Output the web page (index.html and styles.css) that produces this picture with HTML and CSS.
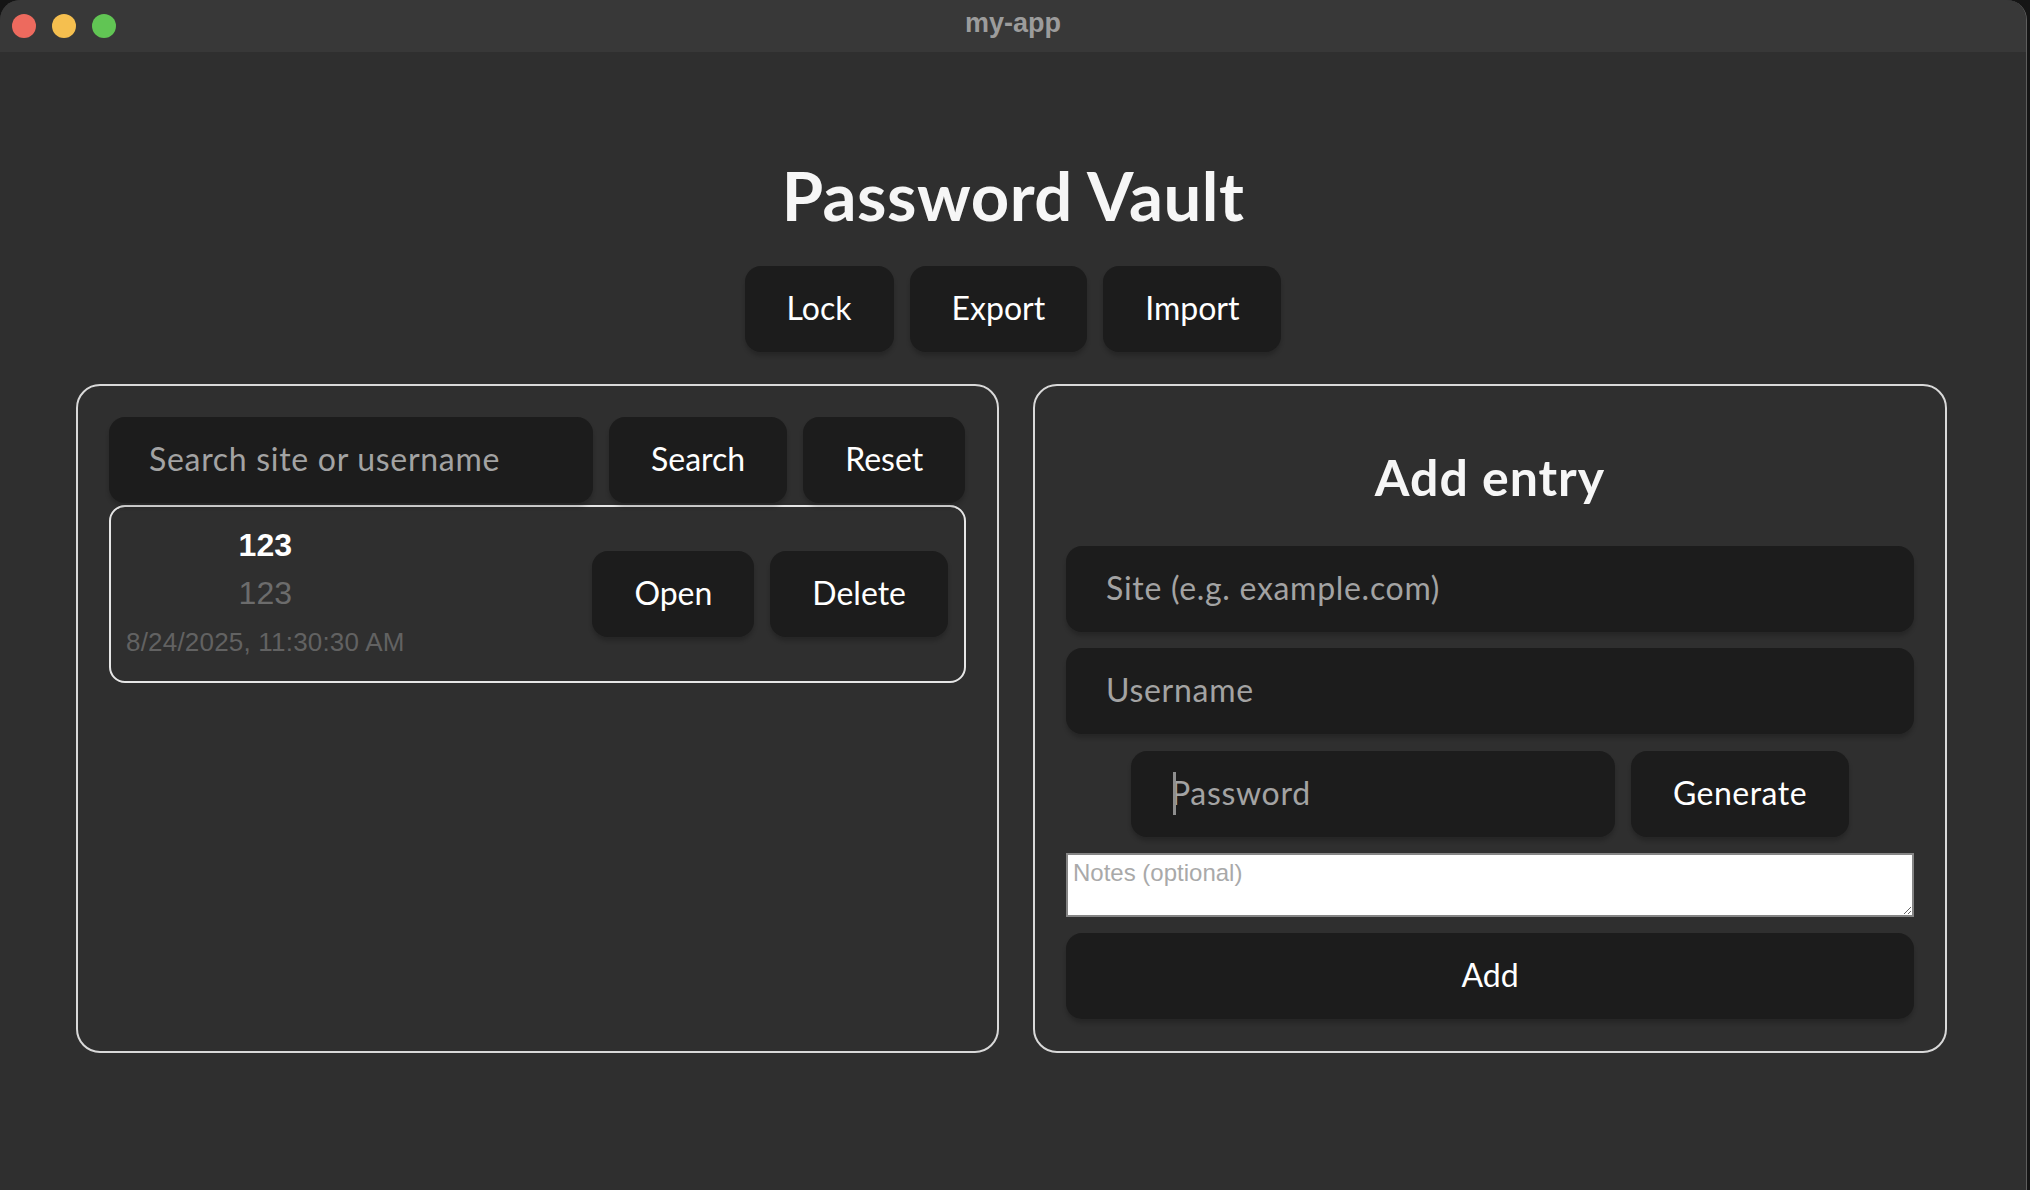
FILE: index.html
```html
<!DOCTYPE html>
<html lang="en">
<head>
<meta charset="utf-8">
<title>my-app</title>
<link rel="stylesheet" href="styles.css">
</head>
<body>
<div class="window">
  <header class="titlebar">
    <div class="lights">
      <span class="light red"></span>
      <span class="light yellow"></span>
      <span class="light green"></span>
    </div>
    <div class="win-title">my-app</div>
    <div class="titlebar-spacer"></div>
  </header>
  <main class="container">
    <h1 class="title">Password Vault</h1>
    <div class="toolbar">
      <button class="btn">Lock</button>
      <button class="btn">Export</button>
      <button class="btn">Import</button>
    </div>
    <div class="columns">
      <section class="panel">
        <div class="search-row">
          <input class="field" type="text" placeholder="Search site or username">
          <button class="btn">Search</button>
          <button class="btn">Reset</button>
        </div>
        <div class="entry">
          <div class="entry-info">
            <div class="entry-site">123</div>
            <div class="entry-user">123</div>
            <div class="entry-date">8/24/2025, 11:30:30 AM</div>
          </div>
          <div class="entry-actions">
            <button class="btn">Open</button>
            <button class="btn">Delete</button>
          </div>
        </div>
      </section>
      <section class="panel form">
        <h2 class="form-title">Add entry</h2>
        <input class="field wide" type="text" placeholder="Site (e.g. example.com)">
        <input class="field wide" type="text" placeholder="Username">
        <div class="pw-row">
          <div class="pw-wrap">
            <input class="field" type="password" placeholder="Password">
            <span class="caret"></span>
          </div>
          <button class="btn btn-generate">Generate</button>
        </div>
        <textarea class="notes" placeholder="Notes (optional)"></textarea>
        <button class="btn wide">Add</button>
      </section>
    </div>
  </main>
</div>
</body>
</html>
```
FILE: styles.css
```css
* {
  box-sizing: border-box;
}

html,
body {
  margin: 0;
  height: 100%;
}

body {
  background: #151515;
  font-family: Lato, "Noto Sans", sans-serif;
  overflow: hidden;
}

.window {
  width: 2027px;
  height: 1190px;
  background: #2f2f2f;
  border-radius: 20px 20px 0 0;
  border-right: 1px solid #5e5e5e;
  overflow: hidden;
  display: flex;
  flex-direction: column;
}

.titlebar {
  flex: none;
  height: 52px;
  background: #383838;
  display: grid;
  grid-template-columns: 1fr auto 1fr;
  align-items: center;
}

.lights {
  display: flex;
  gap: 16px;
  padding-left: 12px;
}

.light {
  width: 24px;
  height: 24px;
  border-radius: 50%;
}

.red { background: #ed6a5e; }
.yellow { background: #f5bf4f; }
.green { background: #61c554; }

.win-title {
  font-family: "Liberation Sans", Arial, sans-serif;
  font-weight: 700;
  font-size: 27px;
  color: #9c9c9c;
  padding-bottom: 5px;
}

.container {
  padding-top: 103px;
  text-align: center;
  color: #f6f6f6;
}

.title {
  margin: 0;
  font-size: 67px;
  line-height: 80px;
  font-weight: 700;
  letter-spacing: 0.5px;
}

.toolbar {
  display: flex;
  justify-content: center;
  gap: 16px;
  margin-top: 31px;
}

.btn {
  font-family: inherit;
  font-size: 32px;
  font-weight: 400;
  line-height: 45px;
  height: 86px;
  padding: 0 40px 3px;
  border: 2px solid transparent;
  border-radius: 16px;
  background: #1c1c1c;
  color: #ffffff;
  box-shadow: 0 4px 4px rgba(0, 0, 0, 0.2);
  cursor: pointer;
}

.btn-generate {
  letter-spacing: 0.5px;
}

.columns {
  display: grid;
  grid-template-columns: 923px 914px;
  column-gap: 34px;
  margin: 32px 0 0 76px;
  text-align: left;
}

.panel {
  border: 2px solid #d9d9d9;
  border-radius: 24px;
  padding: 31px 31px 32px;
}

.search-row {
  display: flex;
  gap: 16px;
}

.field {
  width: 484px;
  height: 86px;
  padding: 0 38px 3px;
  font-family: inherit;
  font-size: 32px;
  letter-spacing: 0.7px;
  color: #ffffff;
  background: #1c1c1c;
  border: 2px solid transparent;
  border-radius: 16px;
  box-shadow: 0 4px 4px rgba(0, 0, 0, 0.2);
  outline: none;
}

.field::placeholder {
  color: #a3a3a3;
}

.entry {
  margin-top: 2px;
  display: flex;
  justify-content: space-between;
  align-items: center;
  border: 2px solid #e6e6e6;
  border-radius: 16px;
  padding: 16px 16px 16px 15px;
}

.entry-info {
  display: flex;
  flex-direction: column;
  align-items: center;
  font-family: "Liberation Sans", Arial, sans-serif;
}

.entry-site {
  font-weight: 700;
  font-size: 32px;
  line-height: 44px;
  color: #ffffff;
}

.entry-user {
  font-size: 32px;
  line-height: 52px;
  color: #6c6c6c;
}

.entry-date {
  font-size: 26px;
  line-height: 46px;
  letter-spacing: 0.2px;
  color: #626262;
}

.entry-actions {
  display: flex;
  gap: 16px;
}

.form {
  display: flex;
  flex-direction: column;
  gap: 16px;
}

.form-title {
  margin: 31px 0 24px;
  font-size: 50px;
  line-height: 58px;
  font-weight: 700;
  letter-spacing: 1px;
  text-align: center;
}

.wide {
  width: 100%;
}

.pw-row {
  display: flex;
  justify-content: center;
  gap: 16px;
  margin-top: 1px;
}

.pw-wrap {
  position: relative;
}

.caret {
  position: absolute;
  left: 42px;
  top: 21px;
  width: 3px;
  height: 43px;
  background: #8e8e8e;
}

.notes {
  display: block;
  width: 100%;
  height: 64px;
  padding: 4px 5px;
  font-family: "Liberation Sans", Arial, sans-serif;
  font-size: 24px;
  color: #000000;
  background: #ffffff;
  border: 2px solid #858585;
  border-radius: 0;
  resize: vertical;
  outline: none;
}

.notes::placeholder {
  color: #a9a9a9;
}
```
